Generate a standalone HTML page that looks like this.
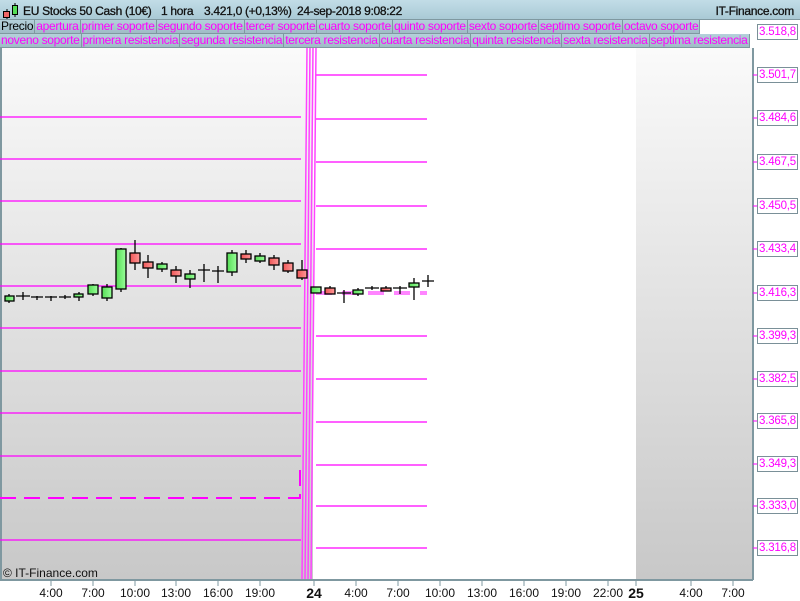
<!DOCTYPE html>
<html><head><meta charset="utf-8"><style>
*{margin:0;padding:0;box-sizing:border-box}
body{width:800px;height:600px;overflow:hidden;background:#fff;font-family:"Liberation Sans",sans-serif;position:relative}
#top{position:absolute;left:0;top:0;width:800px;height:20px;background:linear-gradient(#c2dde7,#a9c9d5);border-bottom:1px solid #7f98a0;font-size:12px;color:#111}
#top b{font-weight:normal;position:absolute;top:4px;white-space:nowrap;letter-spacing:-0.3px;-webkit-text-stroke:0.3px #111}
.row{position:absolute;left:0;width:753px;height:14px;font-size:12px;line-height:13px;white-space:nowrap;overflow:hidden;background:#fff}
.row span{display:inline-block;height:14px;padding:0 1px;letter-spacing:-0.3px;background:linear-gradient(#b5d1db,#9fbcc6);border-right:1px solid #7f98a0;border-bottom:1px solid #7f98a0;color:#f0f;float:left}
.row span.b{color:#000}
.lab{position:absolute;left:757px;width:41px;height:16px;border:1px solid #7a9098;background:#fff;color:#f0f;font-size:11.5px;line-height:14px;text-align:center;letter-spacing:-0.2px;white-space:nowrap}
.t{position:absolute;top:586px;font-size:12px;color:#111;transform:translateX(-50%)}
</style></head><body>
<div id="top">
<svg style="position:absolute;left:2px;top:2px" width="18" height="17"><line x1="5" y1="7" x2="5" y2="17" stroke="#000"/><rect x="1.5" y="9.5" width="6" height="6" fill="#e66" stroke="#000"/><line x1="13" y1="1" x2="13" y2="15" stroke="#000"/><rect x="10.5" y="3.5" width="5" height="9" fill="#5d5" stroke="#000"/></svg>
<b style="left:23px">EU Stocks 50 Cash (10€)</b>
<b style="left:161px">1 hora</b>
<b style="left:204px">3.421,0 (+0,13%)</b>
<b style="left:297px">24-sep-2018 9:08:22</b>
<b style="right:6px">IT-Finance.com</b>
</div>
<div class="row" style="top:20px"><span class="b">Precio</span><span>apertura</span><span>primer soporte</span><span>segundo soporte</span><span>tercer soporte</span><span>cuarto soporte</span><span>quinto soporte</span><span>sexto soporte</span><span>septimo soporte</span><span>octavo soporte</span></div>
<div class="row" style="top:34px"><span>noveno soporte</span><span>primera resistencia</span><span>segunda resistencia</span><span>tercera resistencia</span><span>cuarta resistencia</span><span>quinta resistencia</span><span>sexta resistencia</span><span>septima resistencia</span><span>octavo resistencia</span></div>
<svg style="position:absolute;left:0;top:48px" width="800" height="552">
<defs>
<linearGradient id="g" x1="0" y1="0" x2="0" y2="1"><stop offset="0" stop-color="#fafafa"/><stop offset="1" stop-color="#c8c8c8"/></linearGradient>
<linearGradient id="gc" x1="0" y1="0" x2="1" y2="0"><stop offset="0" stop-color="#5d5"/><stop offset="1" stop-color="#9f9"/></linearGradient>
<linearGradient id="rc" x1="0" y1="0" x2="1" y2="0"><stop offset="0" stop-color="#e55"/><stop offset="1" stop-color="#f99"/></linearGradient>
</defs>
<rect x="0" y="0" width="313" height="532" fill="url(#g)"/>
<rect x="636" y="0" width="117" height="532" fill="url(#g)"/>
<rect x="0" y="0" width="2" height="532" fill="#7f98a0"/>
<g stroke="#f0f" stroke-width="1.2" fill="none">
<path d="M0 69H301M0 111H301M0 153H301M0 196H301M0 238H301M0 280H301M0 323H301M0 365H301M0 408H301M0 492H301"/>
<path d="M316 27H427M316 71H427M316 114H427M316 158H427M316 201H427M316 288H427M316 331H427M316 374H427M316 417H427M316 458H427M316 500H427"/>
<path d="M302 532L307 0M305 532L310 0M308 532L313 0M311 532L316 0" stroke-width="1.5" stroke="#f4f"/>
</g>
<path d="M0 450H300V420" stroke="#f0f" stroke-width="2" stroke-dasharray="16 8" fill="none"/>
<path d="M316 245H427" stroke="#f6f" stroke-width="4" stroke-dasharray="16 10" fill="none" opacity=".8"/>
<g stroke="#000" stroke-width="1.3">
<path d="M9 246V255M23 244V252M16 248H30M37 248V252M31 249H43M51 248V253M45 249H57M65 247V251M59 249H71M79 244V253M93 236V248M107 236V253M121 200V244M135 192V222M148 207V230M162 214V224M176 218V235M190 222V240M204 216V234M198 222H210M218 218V235M212 223H224M232 202V228M246 202V215M260 205V215M274 207V222M288 212V225M302 212V232M330 238V246M344 242V255M337 245H351M358 240V248M372 238V242M365 240H379M386 238V243M400 238V246M393 240H407M414 230V252M428 227V239M422 233H434"/>
<g fill="url(#gc)"><rect x="5" y="248" width="9" height="5"/><rect x="74" y="246" width="9" height="3"/><rect x="88" y="237" width="10" height="9"/><rect x="102" y="239" width="10" height="11"/><rect x="116" y="201" width="10" height="40"/><rect x="157" y="216" width="10" height="5"/><rect x="185" y="226" width="10" height="5"/><rect x="227" y="205" width="10" height="19"/><rect x="255" y="208" width="10" height="5"/><rect x="311" y="239" width="10" height="6"/><rect x="353" y="242" width="10" height="4"/><rect x="409" y="235" width="10" height="4"/></g>
<g fill="url(#rc)"><rect x="130" y="205" width="10" height="10"/><rect x="143" y="214" width="10" height="6"/><rect x="171" y="222" width="10" height="6"/><rect x="241" y="206" width="10" height="5"/><rect x="269" y="210" width="10" height="7"/><rect x="283" y="215" width="10" height="8"/><rect x="297" y="222" width="10" height="8"/><rect x="325" y="240" width="10" height="6"/><rect x="381" y="240" width="10" height="3"/></g>
</g>
<path d="M753 0V532M0 532H753" stroke="#7f98a0" stroke-width="2"/>
<g stroke="#7f98a0"><path d="M51 533V538M93 533V538M135 533V538M176 533V538M218 533V538M260 533V538M314 533V538M356 533V538M398 533V538M440 533V538M482 533V538M524 533V538M566 533V538M608 533V538M636 533V538M691 533V538M733 533V538"/></g>
<g stroke="#f0f"><path d="M753 27H758M753 70H758M753 114H758M753 158H758M753 201H758M753 245H758M753 288H758M753 331H758M753 373H758M753 416H758M753 458H758M753 500H758"/></g>
<text x="3" y="529" font-size="12" font-family="Liberation Sans" fill="#111">© IT-Finance.com</text>
</svg>
<div class="lab" style="top:24px">3.518,8</div>
<div class="lab" style="top:67px">3.501,7</div>
<div class="lab" style="top:110px">3.484,6</div>
<div class="lab" style="top:154px">3.467,5</div>
<div class="lab" style="top:198px">3.450,5</div>
<div class="lab" style="top:241px">3.433,4</div>
<div class="lab" style="top:285px">3.416,3</div>
<div class="lab" style="top:328px">3.399,3</div>
<div class="lab" style="top:371px">3.382,5</div>
<div class="lab" style="top:413px">3.365,8</div>
<div class="lab" style="top:456px">3.349,3</div>
<div class="lab" style="top:498px">3.333,0</div>
<div class="lab" style="top:540px">3.316,8</div>
<div class="t" style="left:51px">4:00</div><div class="t" style="left:93px">7:00</div><div class="t" style="left:135px">10:00</div><div class="t" style="left:176px">13:00</div><div class="t" style="left:218px">16:00</div><div class="t" style="left:260px">19:00</div>
<div class="t" style="left:314px;font-weight:bold;font-size:14px;top:585px">24</div>
<div class="t" style="left:356px">4:00</div><div class="t" style="left:398px">7:00</div><div class="t" style="left:440px">10:00</div><div class="t" style="left:482px">13:00</div><div class="t" style="left:524px">16:00</div><div class="t" style="left:566px">19:00</div><div class="t" style="left:608px">22:00</div>
<div class="t" style="left:636px;font-weight:bold;font-size:14px;top:585px">25</div>
<div class="t" style="left:691px">4:00</div><div class="t" style="left:733px">7:00</div>
</body></html>
